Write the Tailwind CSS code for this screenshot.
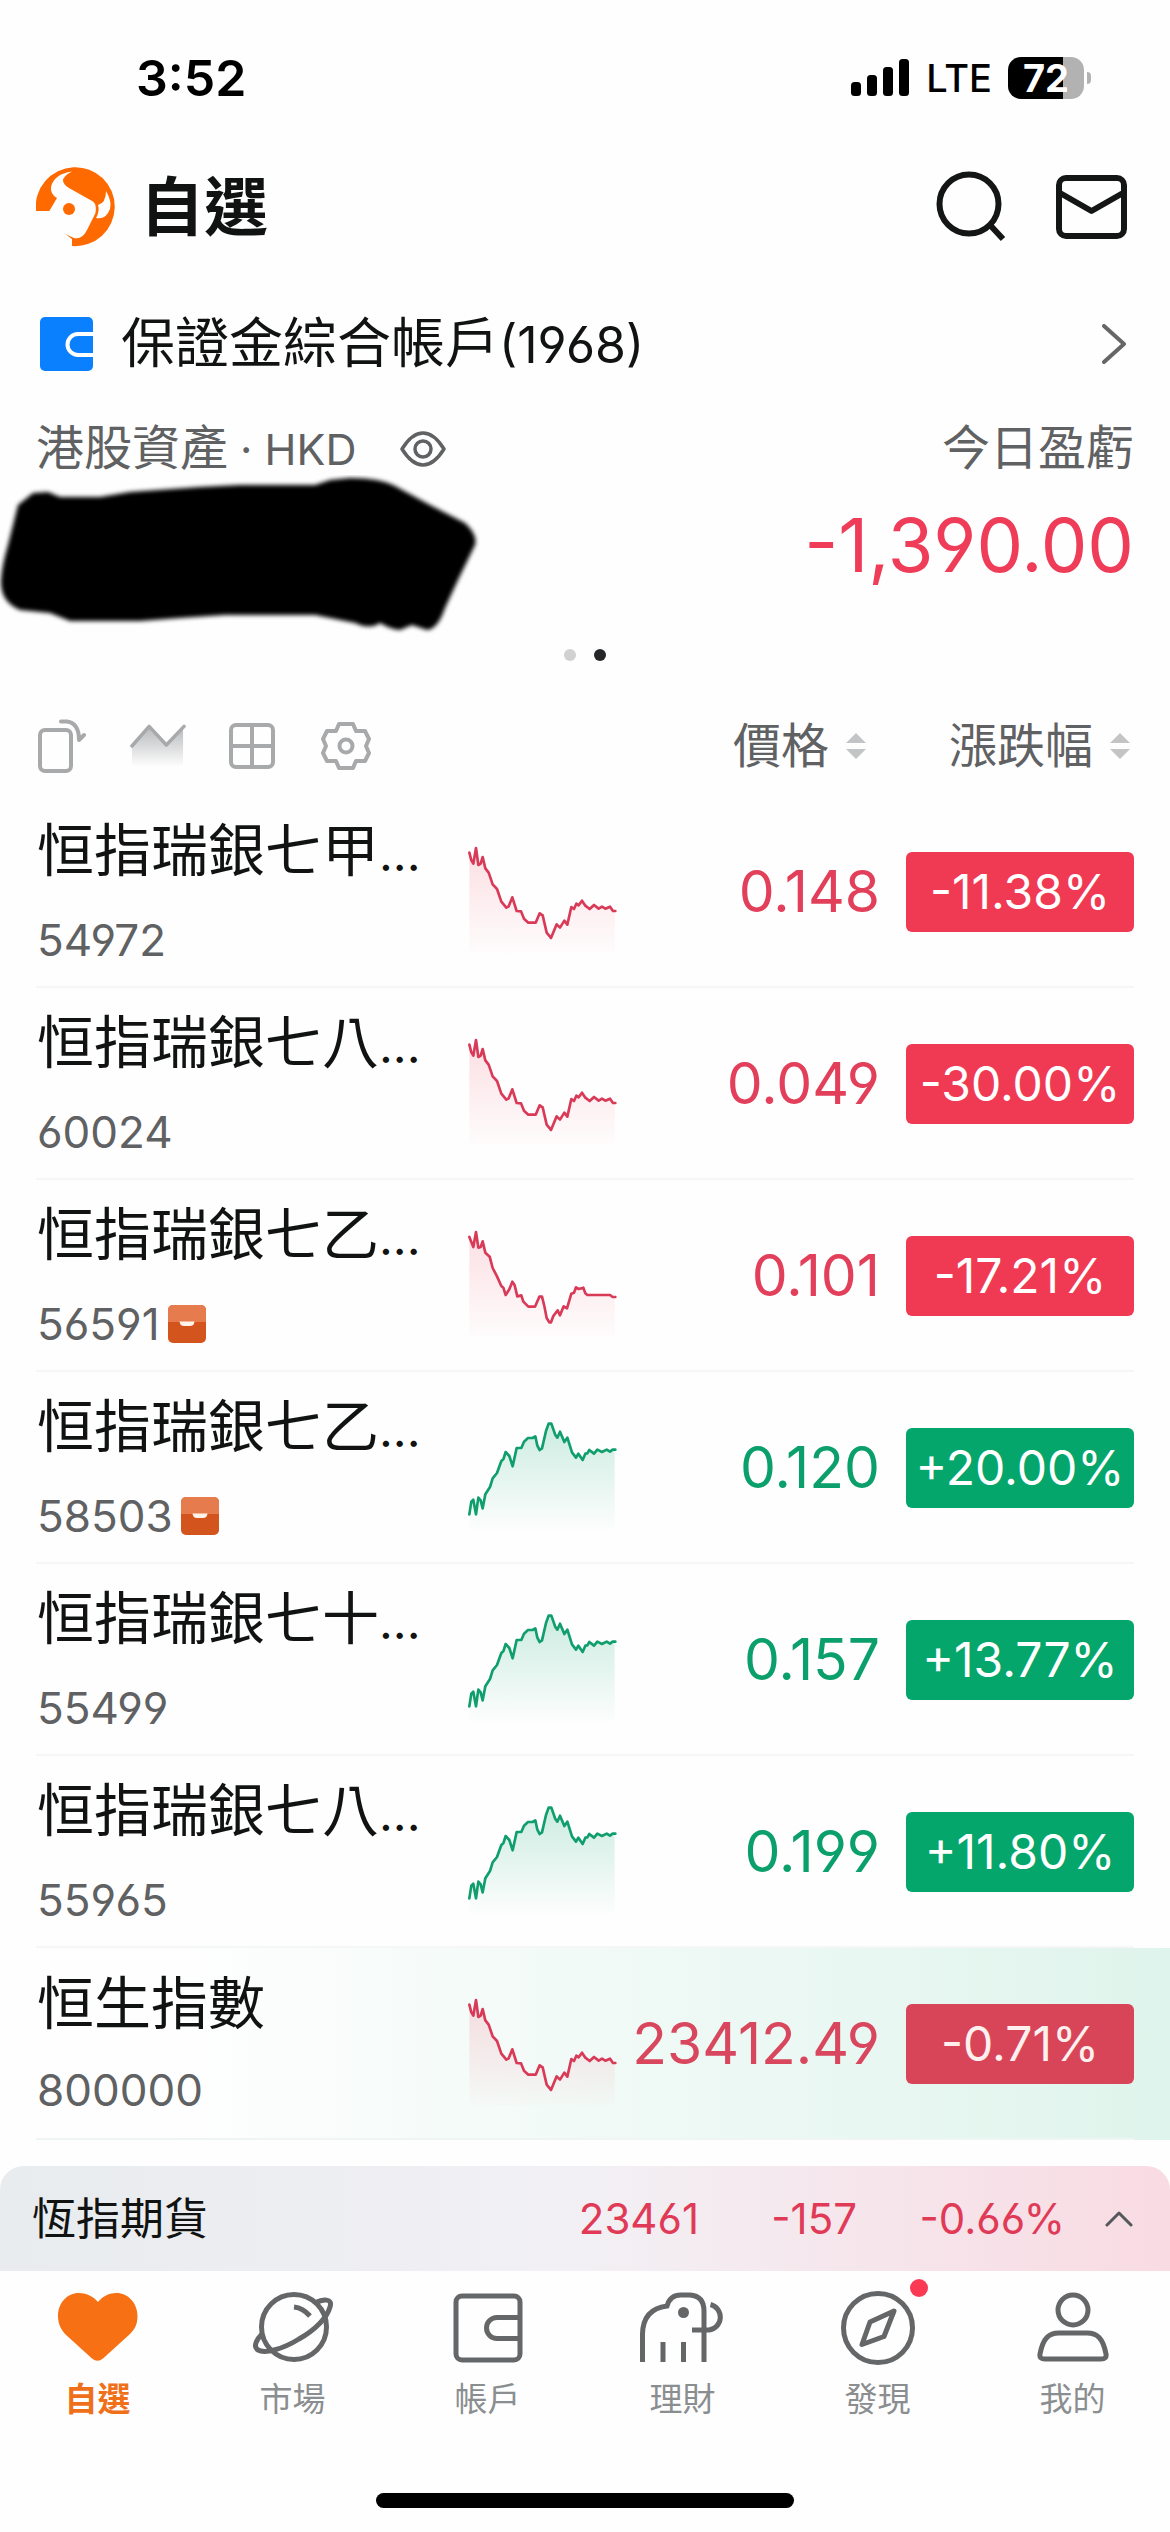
<!DOCTYPE html>
<html lang="zh-Hant">
<head>
<meta charset="utf-8">
<meta name="viewport" content="width=device-width, initial-scale=1">
<title>自選</title>
<script src="https://cdn.jsdelivr.net/npm/@tailwindcss/browser@4"></script>
</head>
<body class="bg-[#fefefe] text-[#111313] font-['Inter','Noto_Sans_CJK_TC',sans-serif] [font-feature-settings:'cv03','cv04']">

<!-- shared chart symbols -->
<svg class="absolute size-0" aria-hidden="true">
  <defs>
    <linearGradient id="redFill" x1="0" y1="0" x2="0" y2="1"><stop offset="0" stop-color="#f03953" stop-opacity=".16"/><stop offset="1" stop-color="#f03953" stop-opacity=".01"/></linearGradient>
    <linearGradient id="greenFill" x1="0" y1="0" x2="0" y2="1"><stop offset="0" stop-color="#04a66c" stop-opacity=".2"/><stop offset="1" stop-color="#04a66c" stop-opacity=".01"/></linearGradient>
    <linearGradient id="greyFill" x1="0" y1="0" x2="0" y2="1"><stop offset="0" stop-color="#a5a7a9" stop-opacity=".8"/><stop offset="1" stop-color="#a5a7a9" stop-opacity="0"/></linearGradient>
    <symbol id="fall" viewBox="84 -15 450 576">
      <path fill="url(#redFill)" d="M88 155L94 178L100 188L108 141L115 192L122 188L128 168L136 202L146 215L158 250L171 264L184 302L199 320L206 316L217 289L230 330L243 331L252 353L265 365H287L299 337L308 343L320 395L333 411L350 370L360 380L373 359L382 371L394 318L402 324L409 308L416 313L426 299L436 314L449 324L462 312L476 323L486 317L496 323L510 317L519 330H524V456H88Z"/>
      <path fill="none" stroke="#d93a58" stroke-width="8" stroke-linejoin="round" stroke-linecap="round" d="M88 155L94 178L100 188L108 141L115 192L122 188L128 168L136 202L146 215L158 250L171 264L184 302L199 320L206 316L217 289L230 330L243 331L252 353L265 365H287L299 337L308 343L320 395L333 411L350 370L360 380L373 359L382 371L394 318L402 324L409 308L416 313L426 299L436 314L449 324L462 312L476 323L486 317L496 323L510 317L519 330H526"/>
    </symbol>
    <symbol id="fallFlat" viewBox="84 -3 450 576">
      <path fill="url(#redFill)" d="M88 168L100 198L108 153L115 200L122 198L128 181L136 215L149 227L158 261L171 286L184 315L190 320L197 342L208 325L217 302L224 313L232 346L244 343L250 362L265 377H285L298 347H306L320 411L328 424L340 405L353 388L360 403L371 376L381 382L394 338L402 335L408 319L430 320L442 342H510L518 348H524V468H88Z"/>
      <path fill="none" stroke="#d93a58" stroke-width="8" stroke-linejoin="round" stroke-linecap="round" d="M88 168L100 198L108 153L115 200L122 198L128 181L136 215L149 227L158 261L171 286L184 315L190 320L197 342L208 325L217 302L224 313L232 346L244 343L250 362L265 377H285L298 347H306L313 375L320 411L328 424H333L340 405L353 388L360 403L371 376L381 382L394 338L402 335L408 319L416 324L430 320L436 337L442 342H510L518 348H526"/>
    </symbol>
    <symbol id="rise" viewBox="84 -27 450 576">
      <path fill="url(#greenFill)" d="M88 400L94 362L100 356L108 400L115 350L122 358L128 382L136 340L150 318L158 292L171 276L184 240L190 235L197 213L208 225L218 256L230 201H244L252 182L264 171H278L286 166L292 194L299 207L306 202L318 150L326 128H334L346 162L352 170L360 152L373 183L382 170L396 214L408 230L415 218L428 237L436 218L442 217L448 207L462 218L472 206L486 213L500 206L510 212L518 206H524V444H88Z"/>
      <path fill="none" stroke="#0f9e6c" stroke-width="8" stroke-linejoin="round" stroke-linecap="round" d="M88 400L94 362L100 356L108 400L115 350L122 358L128 382L136 340L150 318L158 292L171 276L184 240L190 235L197 213L208 225L218 256L230 201H244L252 182L264 171H278L286 166L292 194L299 207L306 202L318 150L326 128H334L346 162L352 170L360 152L373 183L382 170L396 214L408 230L415 218L428 237L436 218L442 217L448 207L462 218L472 206L486 213L500 206L510 212L518 206H526"/>
    </symbol>
    <symbol id="sort" viewBox="0 0 20 28"><path fill="#c3c4c5" d="M10 1L20 11H0ZM10 27L0 17H20Z"/></symbol>
    <symbol id="holding" viewBox="0 0 38 38"><rect width="38" height="38" rx="5" fill="#d4541d"/><path fill="#e67b4d" d="M0 17V5a5 5 0 0 1 5-5H33a5 5 0 0 1 5 5V17Z"/><path fill="#fff4ea" d="M11.500 16.500H26.500Q26 21 22 21H16Q12 21 11.500 16.500Z"/></symbol>
  </defs>
</svg>

<div class="flex min-h-screen flex-col">

  <div class="flex h-[156px] items-center justify-between pl-[136px] pr-[79px] text-black">
    <span class="text-[50px] leading-[60px] font-semibold">3:52</span>
    <div class="flex items-center gap-4">
      <svg class="h-[38px] w-[59px]" viewBox="0 0 59 38"><rect y="23" width="10" height="14" rx="3.500"/><rect x="16" y="16" width="10" height="21" rx="3.500"/><rect x="32" y="8" width="10" height="29" rx="3.500"/><rect x="48" width="10" height="37" rx="3.500"/></svg>
      <span class="text-[38px] leading-[48px] font-medium">LTE</span>
      <div class="flex items-center gap-[3px]">
        <div class="flex h-[42px] w-[76px] items-center justify-center rounded-[13px] bg-linear-to-r from-black from-72% to-[#b2b2b2] to-72% text-[38px] leading-none font-bold text-white">72</div>
        <div class="h-3 w-1 rounded-r-full bg-[#b2b2b2]"></div>
      </div>
    </div>
  </div>

  <header class="flex h-[102px] items-center pl-9 pr-[43px]">
    <svg class="size-20" viewBox="0 0 80 80" aria-hidden="true">
      <path fill="#ff6a00" d="M0 44A39.500 39.500 0 1 1 36 79V72L28 66L20 50L14 44Z"/>
      <path fill="#fefefe" d="M13 44.500L21 31Q14 27 15 20Q18 7 36 4.500Q27 9 27 14Q28 18 33 21L57 34.500Q61 38 59.500 46L51 63Q46 73 38 71L29 67L18 60Z"/>
      <path fill="#fefefe" d="M62 38Q70 36 70 24Q76 34 74 42Q70 53 60 51Q64 44 62 38Z"/>
      <circle cx="33" cy="42" r="6" fill="#ff6a00"/>
    </svg>
    <h1 class="ml-6 flex-1 text-[64px] leading-[80px] font-bold">自選</h1>
    <div class="flex items-center gap-12">
      <button type="button" aria-label="搜尋" class="block"><svg class="size-[72px]" viewBox="0 0 72 72" fill="none" stroke="#141616" stroke-width="6"><circle cx="33" cy="33" r="29.500"/><path d="M54 54L67 68"/></svg></button>
      <button type="button" aria-label="訊息" class="block"><svg class="h-16 w-[71px]" viewBox="0 0 71 64" fill="none" stroke="#141616" stroke-width="6"><rect x="3" y="3" width="65" height="58" rx="7"/><path d="M4 18L35.500 36L67 18" stroke-linejoin="round"/></svg></button>
    </div>
  </header>

  <main>
    <section class="px-9 pt-9">
      <a href="#account" class="flex h-[100px] items-center pr-2">
        <svg class="ml-1 h-[54px] w-[53px]" viewBox="0 0 53 54" aria-hidden="true"><rect width="53" height="54" rx="5" fill="#0a80ff"/><path fill="none" stroke="#fff" stroke-width="4" d="M53 17H38a10.500 10.500 0 0 0 0 21H53"/></svg>
        <span class="ml-7 flex-1 text-[54px] leading-[72px]">保證金綜合帳戶<span class="text-[50px]">(1968)</span></span>
        <svg class="h-10 w-6" viewBox="0 0 24 40" fill="none" stroke="#666" stroke-width="4" stroke-linecap="round" stroke-linejoin="round"><path d="M2 2L22 20L2 38"/></svg>
      </a>
      <div class="flex justify-between pt-6 text-[48px] leading-[60px] text-[#5f6163]">
        <div class="flex items-center">
          <span>港股資產<span class="text-[43px]"> · HKD</span></span>
          <button type="button" aria-label="顯示資產" class="ml-11 block"><svg class="h-9 w-[46px]" viewBox="0 0 46 36" fill="none" stroke="#5f6163" stroke-width="3.500"><path d="M2 18Q12 2 23 2Q34 2 44 18Q34 34 23 34Q12 34 2 18Z" stroke-linejoin="round"/><circle cx="23" cy="18" r="8"/></svg></button>
        </div>
        <span>今日盈虧</span>
      </div>
      <div class="relative flex h-[131px] items-center justify-end">
        <svg class="absolute -left-9 -top-1 h-[160px] w-[480px]" viewBox="0 475 480 160" role="img" aria-label="已遮蓋">
          <defs><filter id="soft"><feGaussianBlur stdDeviation="2"/></filter></defs>
          <path filter="url(#soft)" d="M18 505L33 493L48 492L60 497H100L130 492L200 487L240 485H300L315 485L330 480L350 478Q380 478 395 486L430 505L465 523Q478 535 475 545L458 580L445 608Q438 629 427 630L412 625L400 630Q392 630 380 623Q370 630 355 623L315 615H225L180 618L140 621H70L50 613L20 610Q0 602 1 580Q2 565 8 545Z"/>
        </svg>
        <span class="text-[74px] leading-[80px] text-[#ef3d59]">-1,390.00</span>
      </div>
      <div class="flex h-[90px] items-center justify-center gap-[18px]"><span class="size-3 rounded-full bg-[#d1d1d1]"></span><span class="size-3 rounded-full bg-[#242628]"></span></div>
    </section>

    <table class="block w-full text-left">
      <thead class="block text-[48px] leading-[60px] text-[#5f6163]">
        <tr class="grid h-24 grid-cols-[minmax(0,1fr)_262px_228px] items-center gap-x-[26px] px-9 pb-1">
          <th class="flex gap-[38px] font-normal">
            <button type="button" aria-label="橫屏" class="flex h-14 w-14 items-center"><svg class="h-[54px] w-[50px]" viewBox="0 0 50 54" fill="none" stroke="#a8a9aa" stroke-width="4" stroke-linecap="round" stroke-linejoin="round"><rect x="4" y="11" width="31" height="41" rx="5"/><path d="M25 2.500H31Q43 4 43 21L48 16"/></svg></button>
            <button type="button" aria-label="走勢" class="flex h-14 w-14 items-center justify-center"><svg class="h-11 w-14" viewBox="0 0 57 44"><path fill="url(#greyFill)" d="M2 22L19.500 2L37 21L54 4V43H2Z"/><path fill="none" stroke="#a8a9aa" stroke-width="3.500" stroke-linecap="round" stroke-linejoin="round" d="M2 22L19.500 2L37 21L55 2"/></svg></button>
            <button type="button" aria-label="宮格" class="flex h-14 w-14 items-center justify-center"><svg class="size-[46px]" viewBox="0 0 46 46" fill="none" stroke="#a8a9aa" stroke-width="4"><rect x="2" y="2" width="42" height="42" rx="5"/><path d="M23 2V44M2 23H44"/></svg></button>
            <button type="button" aria-label="設定" class="flex h-14 w-14 items-center justify-center"><svg class="size-[50px]" viewBox="-1 -1 50 50" fill="none" stroke="#a8a9aa" stroke-width="4" stroke-linejoin="round"><path d="M17 2H31L34 9H43L47 17L44 24L47 31L43 39H34L31 46H17L14 39H5L1 31L4 24L1 17L5 9H14Z"/><circle cx="24" cy="24" r="6.500"/></svg></button>
          </th>
          <th class="font-normal"><button type="button" class="flex w-full items-center justify-end gap-[17px] pr-[14px]">價格<svg class="h-7 w-5"><use href="#sort"/></svg></button></th>
          <th class="font-normal"><button type="button" class="flex w-full items-center justify-end gap-[17px] pr-1">漲跌幅<svg class="h-7 w-5"><use href="#sort"/></svg></button></th>
        </tr>
      </thead>
      <tbody class="block">
        <tr class="relative grid h-48 grid-cols-[minmax(0,1fr)_150px_262px_254px] items-center px-9 after:absolute after:inset-x-9 after:bottom-0 after:h-[2px] after:bg-[#f5f6f6]">
          <td class="flex flex-col gap-6 pl-px"><span class="text-[57px] leading-[68px] whitespace-nowrap">恒指瑞銀七甲<span class="text-[48px]">...</span></span><span class="flex items-center gap-3 text-[44px] leading-[56px] text-[#5f6163]">54972</span></td>
          <td><svg class="h-48 w-[150px]"><use href="#fall"/></svg></td>
          <td class="text-right text-[57px] leading-[64px] text-[#e23f5a]">0.148</td>
          <td class="flex justify-end"><span class="flex h-20 w-[228px] items-center justify-center rounded-md bg-[#f03953] text-[48px] leading-none text-white">-11.38%</span></td>
        </tr>
        <tr class="relative grid h-48 grid-cols-[minmax(0,1fr)_150px_262px_254px] items-center px-9 after:absolute after:inset-x-9 after:bottom-0 after:h-[2px] after:bg-[#f5f6f6]">
          <td class="flex flex-col gap-6 pl-px"><span class="text-[57px] leading-[68px] whitespace-nowrap">恒指瑞銀七八<span class="text-[48px]">...</span></span><span class="flex items-center gap-3 text-[44px] leading-[56px] text-[#5f6163]">60024</span></td>
          <td><svg class="h-48 w-[150px]"><use href="#fall"/></svg></td>
          <td class="text-right text-[57px] leading-[64px] text-[#e23f5a]">0.049</td>
          <td class="flex justify-end"><span class="flex h-20 w-[228px] items-center justify-center rounded-md bg-[#f03953] text-[48px] leading-none text-white">-30.00%</span></td>
        </tr>
        <tr class="relative grid h-48 grid-cols-[minmax(0,1fr)_150px_262px_254px] items-center px-9 after:absolute after:inset-x-9 after:bottom-0 after:h-[2px] after:bg-[#f5f6f6]">
          <td class="flex flex-col gap-6 pl-px"><span class="text-[57px] leading-[68px] whitespace-nowrap">恒指瑞銀七乙<span class="text-[48px]">...</span></span><span class="flex items-center gap-2 text-[44px] leading-[56px] text-[#5f6163]">56591<svg class="size-[38px]" role="img" aria-label="持倉"><use href="#holding"/></svg></span></td>
          <td><svg class="h-48 w-[150px]"><use href="#fallFlat"/></svg></td>
          <td class="text-right text-[57px] leading-[64px] text-[#e23f5a]">0.101</td>
          <td class="flex justify-end"><span class="flex h-20 w-[228px] items-center justify-center rounded-md bg-[#f03953] text-[48px] leading-none text-white">-17.21%</span></td>
        </tr>
        <tr class="relative grid h-48 grid-cols-[minmax(0,1fr)_150px_262px_254px] items-center px-9 after:absolute after:inset-x-9 after:bottom-0 after:h-[2px] after:bg-[#f5f6f6]">
          <td class="flex flex-col gap-6 pl-px"><span class="text-[57px] leading-[68px] whitespace-nowrap">恒指瑞銀七乙<span class="text-[48px]">...</span></span><span class="flex items-center gap-2 text-[44px] leading-[56px] text-[#5f6163]">58503<svg class="size-[38px]" role="img" aria-label="持倉"><use href="#holding"/></svg></span></td>
          <td><svg class="h-48 w-[150px]"><use href="#rise"/></svg></td>
          <td class="text-right text-[57px] leading-[64px] text-[#0b9f6b]">0.120</td>
          <td class="flex justify-end"><span class="flex h-20 w-[228px] items-center justify-center rounded-md bg-[#04a66c] text-[48px] leading-none text-white">+20.00%</span></td>
        </tr>
        <tr class="relative grid h-48 grid-cols-[minmax(0,1fr)_150px_262px_254px] items-center px-9 after:absolute after:inset-x-9 after:bottom-0 after:h-[2px] after:bg-[#f5f6f6]">
          <td class="flex flex-col gap-6 pl-px"><span class="text-[57px] leading-[68px] whitespace-nowrap">恒指瑞銀七十<span class="text-[48px]">...</span></span><span class="flex items-center gap-3 text-[44px] leading-[56px] text-[#5f6163]">55499</span></td>
          <td><svg class="h-48 w-[150px]"><use href="#rise"/></svg></td>
          <td class="text-right text-[57px] leading-[64px] text-[#0b9f6b]">0.157</td>
          <td class="flex justify-end"><span class="flex h-20 w-[228px] items-center justify-center rounded-md bg-[#04a66c] text-[48px] leading-none text-white">+13.77%</span></td>
        </tr>
        <tr class="relative grid h-48 grid-cols-[minmax(0,1fr)_150px_262px_254px] items-center px-9 after:absolute after:inset-x-9 after:bottom-0 after:h-[2px] after:bg-[#f5f6f6]">
          <td class="flex flex-col gap-6 pl-px"><span class="text-[57px] leading-[68px] whitespace-nowrap">恒指瑞銀七八<span class="text-[48px]">...</span></span><span class="flex items-center gap-3 text-[44px] leading-[56px] text-[#5f6163]">55965</span></td>
          <td><svg class="h-48 w-[150px]"><use href="#rise"/></svg></td>
          <td class="text-right text-[57px] leading-[64px] text-[#0b9f6b]">0.199</td>
          <td class="flex justify-end"><span class="flex h-20 w-[228px] items-center justify-center rounded-md bg-[#04a66c] text-[48px] leading-none text-white">+11.80%</span></td>
        </tr>
        <tr class="relative grid h-48 grid-cols-[minmax(0,1fr)_150px_262px_254px] items-center bg-linear-to-r from-[#fefefe] from-15% to-[#dff4ec] px-9 after:absolute after:inset-x-9 after:bottom-0 after:h-[2px] after:bg-[#eff5f3]">
          <td class="flex flex-col gap-6 pl-px"><span class="text-[57px] leading-[68px] whitespace-nowrap">恒生指數</span><span class="flex items-center gap-3 text-[44px] leading-[56px] text-[#5f6163]">800000</span></td>
          <td><svg class="h-48 w-[150px]"><use href="#fall"/></svg></td>
          <td class="text-right text-[57px] leading-[64px] text-[#d9475f]">23412.49</td>
          <td class="flex justify-end"><span class="flex h-20 w-[228px] items-center justify-center rounded-md bg-[#d94558] text-[48px] leading-none text-[#fdf0ee]">-0.71%</span></td>
        </tr>
      </tbody>
    </table>
  </main>

  <button type="button" class="mt-[26px] flex h-[105px] items-center rounded-t-3xl bg-linear-to-r from-[#e8ecee] via-[#f2f0f4] to-[#f9dbe3] pl-8 pr-[37px] text-left text-[42px] leading-[56px] text-[#e03a57]">
    <span class="flex-1 text-[44px] text-[#111313]">恆指期貨</span>
    <span>23461</span>
    <span class="w-[158px] text-right">-157</span>
    <span class="w-[208px] text-right">-0.66%</span>
    <svg class="ml-10 h-4 w-7" viewBox="0 0 28 16" fill="none" stroke="#55585a" stroke-width="3" stroke-linecap="round" stroke-linejoin="round"><path d="M2 14L14 2L26 14"/></svg>
  </button>

  <nav class="grid grid-cols-6 pt-5 text-[33px] leading-[44px] text-[#8b8e90]">
    <a href="#watchlist" aria-current="page" class="flex flex-col items-center gap-3 font-bold text-[#f0701a]">
      <svg class="h-[74px] w-20" viewBox="0 -2 80 74" fill="#f77013"><path d="M40 9C36 4 29 0 21 0C9 0 0 10 0 23C0 31 3 36 7 41L34 65.500Q39.500 70 45 65.500L72 41C77 36 79.500 31 79.500 23C79.500 10 70 0 58.500 0C50 0 44 4 40 9Z"/></svg>自選</a>
    <a href="#market" class="flex flex-col items-center gap-3">
      <svg class="h-[74px] w-20" viewBox="0 -1 80 74" fill="none" stroke="#646668" stroke-width="5"><circle cx="41" cy="35" r="32.500"/><path stroke-linejoin="round" d="M62 11C70 7 80 6 77 15C74 26 62 38 46 47C30 57 12 62 5 58C0 55 3 48 9 42"/><path d="M41 15Q50 16 57 24"/></svg>市場</a>
    <a href="#accounts" class="flex flex-col items-center gap-3">
      <svg class="h-[74px] w-[70px]" viewBox="0 -3 70 74" fill="none" stroke="#646668" stroke-width="5"><rect x="3" y="2" width="64" height="64" rx="6"/><path d="M67 23.500H44a10.500 10.500 0 0 0 0 21H67"/></svg>帳戶</a>
    <a href="#wealth" class="flex flex-col items-center gap-3">
      <svg class="h-[74px] w-[86px]" viewBox="0 -1 86 74" fill="none" stroke="#646668" stroke-width="5"><path d="M2.500 70V42Q3 17 27 14Q30 3 41 3H50Q64 4 64 19V70M23 50V70M43.500 50V70M70.500 12.500A13 13 0 0 1 69 38H52"/><circle cx="43.500" cy="20.500" r="5.500" fill="#646668" stroke="none"/></svg>理財</a>
    <a href="#discover" class="relative flex flex-col items-center gap-3">
      <svg class="h-[74px] w-[76px]" viewBox="0 1 76 74" fill="none" stroke="#646668" stroke-width="5"><circle cx="38" cy="38" r="34.500"/><path stroke-linejoin="round" d="M54 21L30 32L22 54.500L44 46.500Z"/></svg>發現
      <span class="absolute -top-3 left-1/2 ml-8 size-[18px] rounded-full bg-[#f93a52]"></span></a>
    <a href="#me" class="flex flex-col items-center gap-3">
      <svg class="h-[74px] w-[72px]" viewBox="0 -1 72 74" fill="none" stroke="#646668" stroke-width="5"><circle cx="36" cy="18" r="15"/><path d="M3 62C6 46 12 41 22 41H50C60 41 66 46 69 62Q70 67 64 67H8Q2 67 3 62Z"/></svg>我的</a>
  </nav>

  <div class="mt-auto flex justify-center pb-6"><div class="h-[15px] w-[418px] rounded-full bg-black"></div></div>
</div>
</body>
</html>
